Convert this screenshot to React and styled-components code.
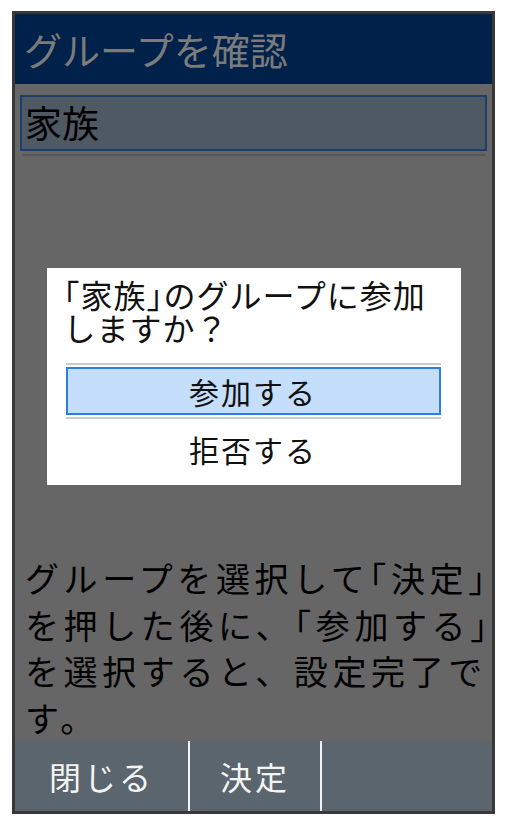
import styled, { createGlobalStyle } from "styled-components";

const GlobalStyle = createGlobalStyle`
    html, body {
        margin: 0;
        padding: 0;
        background: #fff;
    }
    body {
        font-family: "Noto Sans CJK JP", "Noto Sans", sans-serif;
    }
`;

const Phone = styled.div`
    box-sizing: border-box;
    margin: 11px 0 0 12px;
    width: 483px;
    height: 803px;
    border: 3px solid #383838;
    background: #666666;
    display: flex;
    flex-direction: column;
`;

const Header = styled.header`
    height: 70px;
    flex-shrink: 0;
    background: #00214a;
    color: #7b7b7b;
    font-size: 38px;
    line-height: 70px;
    padding-left: 9px;
    white-space: nowrap;
`;

const Content = styled.main`
    flex: 1;
    display: flex;
    flex-direction: column;
    min-height: 0;
`;

const GroupItem = styled.div`
    box-sizing: border-box;
    margin: 11px 5px 0 5px;
    height: 56px;
    border: 2px solid #1d3f6e;
    background: #4e5964;
    color: #000;
    font-size: 37px;
    line-height: 50px;
    padding-left: 3px;
`;

const Divider = styled.div`
    height: 2px;
    margin: 3px 7px 0 8px;
    background: #555555;
`;

const Dialog = styled.div`
    width: 414px;
    margin: 112px auto 0;
    background: #fff;
    padding: 10px 0 6px;
    box-sizing: border-box;
`;

const Question = styled.p`
    margin: 0 0 19px;
    padding-left: 17px;
    font-size: 32px;
    letter-spacing: 1px;
    line-height: 33px;
    color: #111;
`;

// half-width brackets, as the handset sets them
const Bracket = styled.span`
    font-feature-settings: "halt";
`;

const Rule = styled.div`
    height: 2px;
    margin: 0 20px 2px 19px;
    background: #c9cdc9;
`;

const Choice = styled.div`
    box-sizing: border-box;
    margin: 0 20px 2px 19px;
    height: ${p => p.$tall ? 56 : 48}px;
    display: flex;
    align-items: center;
    justify-content: center;
    font-size: 30px;
    letter-spacing: 2px;
    color: #111;
    border: 2px solid ${p => p.$active ? "#2b7de9" : "transparent"};
    background: ${p => p.$active ? "#c4defc" : "transparent"};
`;

const Guide = styled.div`
    margin-top: auto;
    padding: 0 0 0 10px;
    font-size: 34px;
    letter-spacing: 4.6px;
    line-height: 46.5px;
    color: #000;
    span.line {
        display: block;
        white-space: nowrap;
    }
`;

const SoftKeys = styled.nav`
    height: 70px;
    flex-shrink: 0;
    display: flex;
    background: #5b656d;
`;

const SoftKey = styled.div`
    width: ${p => p.$w}px;
    flex: ${p => p.$w ? "none" : 1};
    border-right: ${p => p.$w ? "2px solid #f2f2f2" : "none"};
    display: flex;
    align-items: center;
    justify-content: center;
    color: #f4f4f4;
    font-size: 32px;
    letter-spacing: 3px;
`;

export default function App() {
    return (
        <>
            <GlobalStyle />
            <Phone>
                <Header>グループを確認</Header>
                <Content>
                    <GroupItem>家族</GroupItem>
                    <Divider />
                    <Dialog>
                        <Question>
                            <Bracket>「</Bracket>家族<Bracket>」</Bracket>のグループに参加<br />しますか？
                        </Question>
                        <Rule />
                        <Choice $active>参加する</Choice>
                        <Rule />
                        <Choice $tall>拒否する</Choice>
                    </Dialog>
                    <Guide>
                        <span className="line">グループを選択して<Bracket>「</Bracket>決定<Bracket>」</Bracket></span>
                        <span className="line">を押した後に、「参加する<Bracket>」</Bracket></span>
                        <span className="line">を選択すると、設定完了で</span>
                        <span className="line">す。</span>
                    </Guide>
                </Content>
                <SoftKeys>
                    <SoftKey $w={173}>閉じる</SoftKey>
                    <SoftKey $w={130}>決定</SoftKey>
                    <SoftKey />
                </SoftKeys>
            </Phone>
        </>
    );
}
